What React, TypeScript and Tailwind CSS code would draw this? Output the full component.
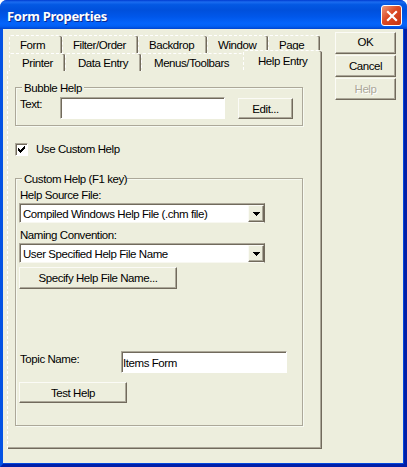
import type { ReactNode } from "react";

const raised =
  "border border-t-[#fbfbf6] border-l-[#fbfbf6] border-r-[#716a5c] border-b-[#716a5c] shadow-[inset_-1px_-1px_0_#aca899]";
const sunken =
  "border border-t-[#aca899] border-l-[#aca899] border-r-white border-b-white bg-white shadow-[inset_1px_1px_0_#716a5c]";

function Button({ className, children }: { className: string; children: ReactNode }) {
  return (
    <button className={`flex shrink-0 items-center justify-center whitespace-nowrap bg-[#edeedd] ${raised} ${className}`}>
      {children}
    </button>
  );
}

function Tab({ className, children }: { className: string; children: ReactNode }) {
  return (
    <div
      className={`flex shrink-0 items-center whitespace-nowrap rounded-t-[2px] border-t border-l border-dashed border-t-white border-l-white bg-[#edeedd] ${className}`}
    >
      {children}
    </div>
  );
}

const edge = "shadow-[inset_-1px_0_0_#716a5c,inset_-2px_0_0_#aca899]";

function Combo({ text, className }: { text: string; className: string }) {
  return (
    <div className={`flex h-5 w-[246px] shrink-0 items-stretch justify-between border border-t-[#aca899] border-l-[#aca899] border-r-[#716a5c] border-b-[#f8f8f1] bg-white pt-px shadow-[inset_1px_1px_0_#716a5c] ${className}`}>
      <span className="pl-[3px] leading-[18px] whitespace-nowrap">{text}</span>
      <span className={`flex w-4 items-center justify-center bg-[#edeedd] ${raised}`}>
        <svg width="7" height="4" viewBox="0 0 7 4" shapeRendering="crispEdges">
          <path d="M0 0h7v1H6v1H5v1H4v1H3V3H2V2H1V1H0z" />
        </svg>
      </span>
    </div>
  );
}

export default function App() {
  return (
    <div className="h-[467px] w-[407px] bg-white">
      <div className="flex h-full w-full flex-col overflow-hidden rounded-t-[7px] bg-[#0347dc] font-['Liberation_Sans',Arial,sans-serif] text-[11.5px] leading-[14px] tracking-[-0.43px] text-black">
        <header className="flex h-[29px] shrink-0 items-start justify-between bg-[linear-gradient(180deg,#003bd0_0%,#1b6cf0_7%,#0358e3_16%,#0050dc_35%,#0057ea_58%,#0464fb_80%,#0260f5_90%,#0045cf_100%)] pt-[5px] pr-[5px] pl-[7px]">
          <h1 className="font-['Noto_Sans',sans-serif] text-[13px] leading-[22px] font-bold tracking-[-0.3px] whitespace-nowrap text-white [text-shadow:1px_1px_0_#0a2a90]">
            Form Properties
          </h1>
          <button className="flex h-[21px] w-[21px] items-center justify-center rounded-[3px] border border-white bg-[linear-gradient(135deg,#ee9a7c,#dc4a24_45%,#c53412)]">
            <svg width="12" height="12" viewBox="0 0 12 12">
              <path d="M1.2 1.2l9.6 9.6M10.8 1.2l-9.6 9.6" stroke="white" strokeWidth="2.2" />
            </svg>
          </button>
        </header>
        <div className="flex min-h-0 flex-1 border-r-3 border-b-3 border-l-3 border-t-0 border-l-[#0453e4] border-r-[#001fa8] border-b-[#001fa8] bg-[#edeedd] shadow-[inset_-1px_-1px_0_#0347dc]">
          <main className="mt-[6px] ml-1 flex w-[315px] flex-col">
            <div className="flex h-[18px] shrink-0 pl-[2px]">
              <Tab className={`w-[53px] pl-[10px] ${edge}`}>Form</Tab>
              <Tab className={`w-[76px] pl-[10px] ${edge}`}>Filter/Order</Tab>
              <Tab className={`w-[69px] pl-[10px] ${edge}`}>Backdrop</Tab>
              <Tab className={`w-[61px] pl-[10px] ${edge}`}>Window</Tab>
              <Tab className={`w-[52px] pl-[10px] ${edge}`}>Page</Tab>
            </div>
            <div className="flex h-[18px] shrink-0 items-end pl-[2px]">
              <Tab className={`h-[18px] w-[56px] pl-[12px] ${edge}`}>Printer</Tab>
              <Tab className={`h-[18px] w-[76px] pl-[12px] ${edge}`}>Data Entry</Tab>
              <Tab className="h-[18px] w-[102px] pl-[12px]">Menus/Toolbars</Tab>
              <Tab className={`h-[21px] w-[79px] pb-px pl-[14px] ${edge}`}>Help Entry</Tab>
            </div>
            <section className="flex h-[378px] shrink-0 flex-col border-l border-dashed border-l-white pl-[7px] shadow-[inset_-1px_-1px_0_#716a5c,inset_-2px_-2px_0_#aca899]">
              <div className="mt-[16px] flex h-[39px] w-[288px] shrink-0 flex-col border border-[#aca899] shadow-[1px_1px_0_#f7faf1,inset_1px_1px_0_#f7faf1]">
                <span className="-mt-[7px] ml-[6px] w-[62px] shrink-0 bg-[#edeedd] pl-[2px] whitespace-nowrap">Bubble Help</span>
                <div className="flex pl-1">
                  <span className="mt-[2px] w-[40px]">Text:</span>
                  <div className={`mt-[2px] h-[22px] w-[165px] shrink-0 ${sunken}`} />
                  <Button className="mt-[3px] ml-[13px] h-[21px] w-[55px]">Edit...</Button>
                </div>
              </div>
              <label className="mt-[16px] flex h-[14px] shrink-0 items-center">
                <span className={`flex h-[13px] w-[13px] items-center justify-center ${sunken}`}>
                  <svg width="7" height="7" viewBox="0 0 7 7" shapeRendering="crispEdges">
                    <path d="M0 2h1v1h1v1h1V3h1V2h1V1h1V0h1v3H6v1H5v1H4v1H3v1H2V6H1V5H0z" />
                  </svg>
                </span>
                <span className="ml-[8px] whitespace-nowrap">Use Custom Help</span>
              </label>
              <div className="mt-[22px] flex h-[248px] w-[288px] shrink-0 flex-col border border-[#aca899] pl-[3px] shadow-[1px_1px_0_#f7faf1,inset_1px_1px_0_#f7faf1]">
                <span className="-mt-[7px] ml-[3px] w-[105px] shrink-0 bg-[#edeedd] pl-[2px] whitespace-nowrap">Custom Help (F1 key)</span>
                <span className="mt-[2px] ml-px shrink-0">Help Source File:</span>
                <Combo className="mt-px" text="Compiled Windows Help File (.chm file)" />
                <span className="mt-[5px] ml-px shrink-0">Naming Convention:</span>
                <Combo className="mt-px" text="User Specified Help File Name" />
                <Button className="mt-[4px] h-[22px] w-[158px] pb-px">Specify Help File Name...</Button>
                <div className="mt-[62px] flex shrink-0">
                  <span className="ml-px w-[101px] pt-px">Topic Name:</span>
                  <div className={`h-[22px] w-[166px] pl-px leading-[22px] ${sunken}`}>Items Form</div>
                </div>
                <Button className="mt-[9px] h-[21px] w-[108px]">Test Help</Button>
              </div>
            </section>
          </main>
          <aside className="mt-[3px] ml-[13px] flex flex-col gap-px">
            <Button className="h-[22px] w-[61px] pb-[2px]">OK</Button>
            <Button className="h-[22px] w-[61px] pb-px">Cancel</Button>
            <Button className="h-[22px] w-[61px] pb-px text-[#aca899] [text-shadow:1px_1px_0_white]">Help</Button>
          </aside>
        </div>
      </div>
    </div>
  );
}
